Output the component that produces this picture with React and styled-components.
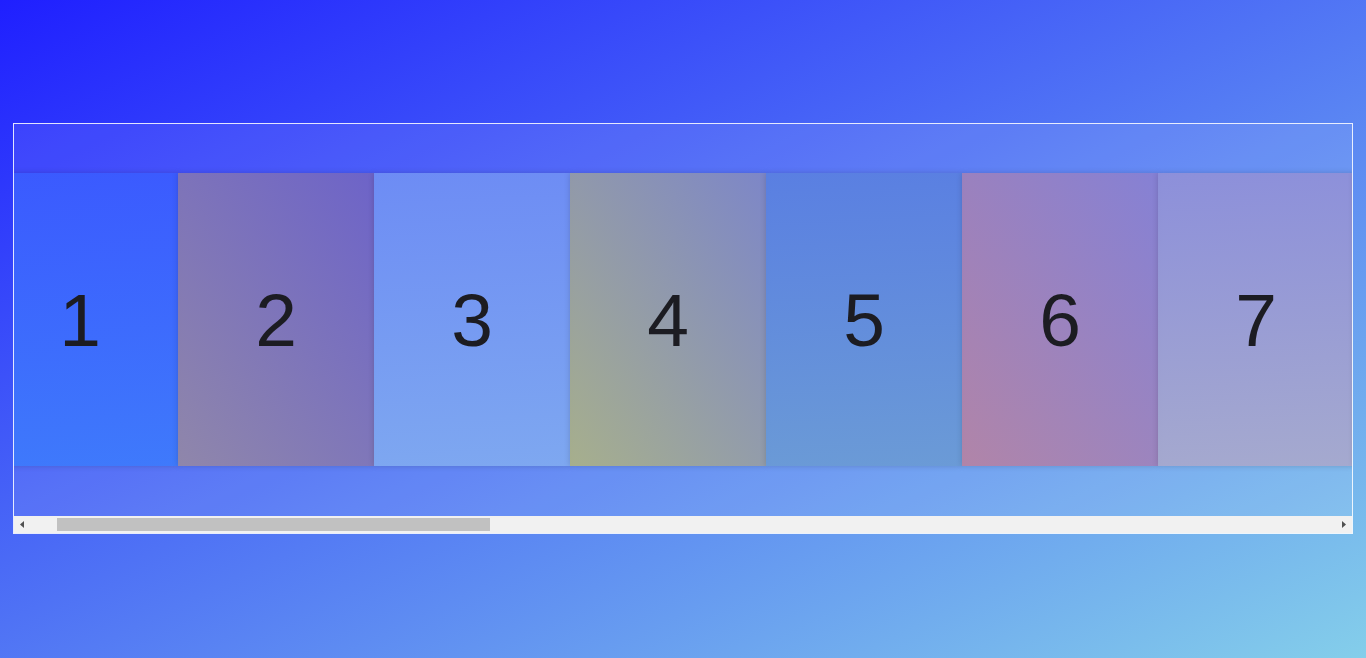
import { useLayoutEffect, useRef } from "react";
import styled, { createGlobalStyle } from "styled-components";

const GlobalStyle = createGlobalStyle`
	html, body, #root {
		margin: 0;
		height: 100%;
	}
	body {
		font-family: "Liberation Sans", Arial, sans-serif;
		background: linear-gradient(to bottom right, #1f1fff, #84ceea);
		overflow: hidden;
	}
`;

const Page = styled.main`
	height: 100%;
	display: flex;
	align-items: center;
	padding: 0 13px 2px;
	box-sizing: border-box;
`;

const Frame = styled.section`
	width: 100%;
	box-sizing: border-box;
	border: 1px solid rgba(255, 255, 255, 0.85);
	background: rgba(255, 255, 255, 0.09);
	display: flex;
	flex-direction: column;
`;

const Viewport = styled.div`
	height: 392px;
	overflow: hidden;
`;

const Track = styled.div`
	display: flex;
	align-items: center;
	width: max-content;
	height: 100%;
	padding: 0 68px 0 54px;
`;

const Card = styled.div`
	flex: 0 0 196px;
	height: 293px;
	display: flex;
	align-items: center;
	justify-content: center;
	background: ${(p) => p.$bg};
	box-shadow: 0 0 6px rgba(0, 0, 0, 0.16);
	font-size: 75px;
	color: #1c1c22;
`;

const ScrollBar = styled.div`
	height: 17px;
	display: flex;
	background: #f1f1f1;
`;

const ArrowButton = styled.div`
	flex: 0 0 16px;
	display: flex;
	align-items: center;
	justify-content: center;
`;

const Rail = styled.div`
	flex: 1;
	display: flex;
	padding: 2px 0;
`;

const Thumb = styled.div`
	background: #c1c1c1;
`;

const backgrounds = [
	"linear-gradient(to bottom, rgba(58, 92, 255, 0.9), rgba(60, 122, 252, 0.9))",
	"linear-gradient(to top right, rgba(148, 136, 164, 0.92), rgba(112, 100, 196, 0.92))",
	"linear-gradient(to bottom, rgba(112, 144, 244, 0.92), rgba(128, 170, 240, 0.92))",
	"linear-gradient(to top right, rgba(172, 178, 132, 0.92), rgba(128, 136, 196, 0.92))",
	"linear-gradient(to bottom, rgba(90, 128, 224, 0.92), rgba(106, 154, 212, 0.92))",
	"linear-gradient(to top right, rgba(182, 130, 162, 0.92), rgba(136, 128, 210, 0.92))",
	"linear-gradient(to bottom, rgba(144, 144, 216, 0.92), rgba(168, 168, 204, 0.92))",
	"linear-gradient(to top right, rgba(120, 180, 200, 0.92), rgba(120, 150, 230, 0.92))",
	"linear-gradient(to bottom, rgba(150, 120, 200, 0.92), rgba(170, 150, 190, 0.92))",
	"linear-gradient(to top right, rgba(160, 190, 150, 0.92), rgba(120, 160, 220, 0.92))",
];

const cards = Array.from({ length: 20 }, (_, i) => ({
	id: i + 1,
	bg: backgrounds[i % backgrounds.length],
}));

const SCROLL = 86;

const App = () => {
	const viewportRef = useRef(null);

	useLayoutEffect(() => {
		if (viewportRef.current) viewportRef.current.scrollLeft = SCROLL;
	}, []);

	return (
		<>
			<GlobalStyle />
			<Page>
				<Frame>
					<Viewport ref={viewportRef}>
						<Track>
							{cards.map((card) => (
								<Card key={card.id} $bg={card.bg}>
									{card.id}
								</Card>
							))}
						</Track>
					</Viewport>
					<ScrollBar>
						<ArrowButton>
							<svg width="4" height="7" viewBox="0 0 4 7">
								<path d="M4 0 L0 3.5 L4 7 Z" fill="#505050" />
							</svg>
						</ArrowButton>
						<Rail>
							<Thumb style={{ marginLeft: 27, width: 433 }} />
						</Rail>
						<ArrowButton>
							<svg width="4" height="7" viewBox="0 0 4 7">
								<path d="M0 0 L4 3.5 L0 7 Z" fill="#505050" />
							</svg>
						</ArrowButton>
					</ScrollBar>
				</Frame>
			</Page>
		</>
	);
};

export default App;
